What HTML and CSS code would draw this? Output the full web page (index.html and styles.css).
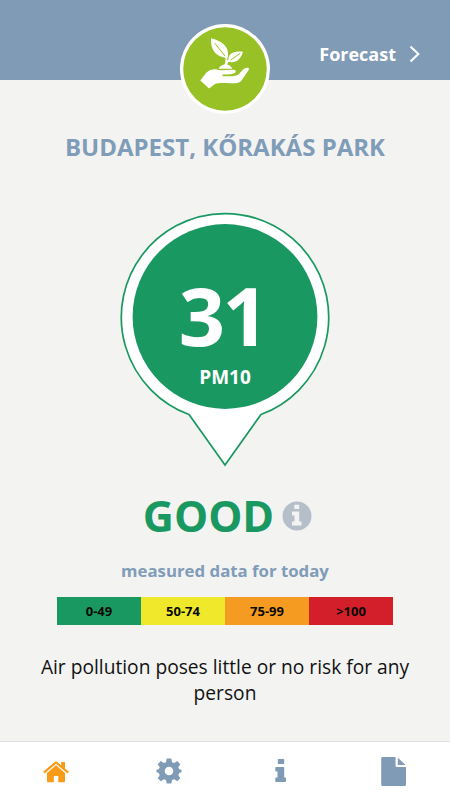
FILE: index.html
```html
<!DOCTYPE html>
<html lang="en">
<head>
<meta charset="utf-8">
<meta name="viewport" content="width=device-width, initial-scale=1">
<title>Air quality</title>
<link rel="stylesheet" href="styles.css">
</head>
<body>
<div class="app">
  <header class="header">
    <svg class="logo" viewBox="0 0 90 90" aria-hidden="true">
      <circle cx="45" cy="45" r="45" fill="#fff"/>
      <circle cx="45" cy="45" r="41.8" fill="#98c125"/>
      <g fill="#fff">
        <path d="M31 14.200C41 16.500 50 22 47.600 34C38 33 30.500 28.500 31 14.200Z"/>
        <path d="M63 27.800C60.500 36 55.500 39.500 48.700 37.800C47 29.500 53.500 26.300 63 27.800Z"/>
        <path d="M38.600 44.700C39.500 42 42.500 41.300 44.500 40.300Q46 39.500 47.500 40.500C50 41.500 51.500 42.500 52 44.700Z"/>
        <path d="M20.300 56.500L26 49C30 45.300 34 44.800 37.500 45.700C44 47.200 50 44.600 55.500 46.200C57 49.500 52 50.700 44 50.500C42 50.500 41.500 52 43.500 52.200C50 52.500 57 52.500 59.500 49.500C62 46.500 64.500 43.300 68 43.700C70.500 44.500 67.500 47.500 66 50L61.500 56.500C59.500 59.500 55 59.300 50 59.200C44 59 38 58.800 35 60L29 64.500Z"/>
      </g>
      <g fill="none" stroke-linecap="round">
        <path d="M35 19.500L45 32M60 29.500L50 36.500" stroke="#98c125" stroke-width="1"/>
        <path d="M45.600 41Q47 35 46 31.500M46.300 40Q47.500 37 50 35.800" stroke="#fff" stroke-width="1.800"/>
      </g>
    </svg>
    <a class="forecast"><span>Forecast</span>
      <svg class="chevron" viewBox="0 0 12 18" aria-hidden="true"><path d="M1.500 1.500L9.300 9L1.500 16.500" fill="none" stroke="#fff" stroke-width="2.100"/></svg>
    </a>
  </header>
  <main class="main">
    <h1 class="station">BUDAPEST, KŐRAKÁS PARK</h1>
    <section class="reading">
      <svg class="pin" viewBox="0 0 210 254" aria-hidden="true">
        <path d="M69 202.500A103.700 103.700 0 1 1 141 202.500L105 253Z" fill="#fff" stroke="#199961" stroke-width="1.700"/>
        <circle cx="105" cy="104.500" r="92.400" fill="#199961"/>
      </svg>
      <div class="reading-text"><div class="value">31</div><div class="unit">PM10</div></div>
    </section>
    <div class="status"><span class="status-text">GOOD</span>
      <svg class="status-info" viewBox="0 0 30 30" aria-hidden="true"><circle cx="15" cy="15" r="14.500" fill="#b6bfc9"/><path d="M12.300 3.800H17.200V8H12.300ZM10 10.500H17.200V20.500H19.500V24.500H10V20.500H12.500V14.500H10Z" fill="#f3f3f1"/></svg>
    </div>
    <p class="note">measured data for today</p>
    <div class="scale">
      <div class="band band-good">0-49</div><div class="band band-fair">50-74</div><div class="band band-poor">75-99</div><div class="band band-bad">&gt;100</div>
    </div>
    <p class="advice">Air pollution poses little or no risk for any person</p>
  </main>
  <nav class="tabs">
    <a class="tab tab-active"><svg viewBox="0 0 32 32" aria-hidden="true"><path d="M3.200 16.700L14.700 6.900Q16 5.900 17.300 6.900L21.200 10.200V7H25V13.400L28.900 16.700L27.500 18.400L16 8.800L4.600 18.400Z"/><path d="M16 10.300L25 17.900V26.300Q25 27.300 24 27.300H18.300V21H13.800V27.300H8Q7 27.300 7 26.300V17.900Z"/></svg></a>
    <a class="tab"><svg viewBox="0 0 32 32" aria-hidden="true"><path fill-rule="evenodd" d="M13.700 3.500H18.300L19 7.200L21.200 8.100L24.200 6L27.300 9.200L25.300 12.200L26.200 14.200L28.500 14.700V17.300L26.200 18L25.300 20.200L27.300 23.200L24.200 26.200L21.200 24.200L19 25.100L18.300 28.500H13.700L13 25.100L10.800 24.200L7.800 26.200L4.700 23.200L6.700 20.200L5.800 18L3.500 17.300V14.700L5.800 14.200L6.700 12.200L4.700 9.200L7.800 6L10.800 8.100L13 7.200ZM16 11.700A4.300 4.300 0 1 0 16 20.300A4.300 4.300 0 1 0 16 11.700Z"/></svg></a>
    <a class="tab"><svg viewBox="0 0 32 32" aria-hidden="true"><path d="M13.300 4H18.700Q19.200 4 19.200 4.500V8.500Q19.200 9 18.700 9H13.300Q12.800 9 12.800 8.500V4.500Q12.800 4 13.300 4ZM11 12H18.500Q19.200 12 19.200 12.700V22.500H20.300Q21 22.500 21 23.200V26.300Q21 27 20.300 27H11Q10.300 27 10.300 26.300V23.200Q10.300 22.500 11 22.500H12.500V16.500H11Q10.300 16.500 10.300 15.800V12.700Q10.300 12 11 12Z"/></svg></a>
    <a class="tab"><svg viewBox="0 0 32 32" aria-hidden="true"><path d="M4.500 2H17.500V10.500Q17.500 12 19 12H28V29.500Q28 31 26.500 31H4.500Q3.200 31 3.200 29.500V3.500Q3.200 2 4.500 2ZM19.800 2.800L27.600 10H19.800Z"/></svg></a>
  </nav>
</div>
</body>
</html>
```
FILE: styles.css
```css
* { box-sizing: border-box; }
body { margin: 0; font-family: "Open Sans", "Noto Sans", sans-serif; background: #f3f3f1; }
.app { width: 450px; height: 800px; display: flex; flex-direction: column; }
.header { position: relative; height: 80px; background: #809bb5; display: flex; justify-content: flex-end; padding: 40px 29px 0 0; }
.logo { position: absolute; left: 180px; top: 24px; width: 90px; height: 90px; }
.forecast { display: flex; align-items: center; gap: 13px; height: 28px; color: #fff; font-size: 18px; font-weight: 700; }
.chevron { width: 12px; height: 18px; }
.main { flex: 1; display: flex; flex-direction: column; align-items: center; }
.station { margin: 49px 0 0; font-size: 24px; line-height: 36px; font-weight: 700; color: #7f9cb8; white-space: nowrap; }
.reading { display: grid; width: 210px; height: 254px; margin-top: 47px; }
.pin, .reading-text { grid-area: 1 / 1; }
.pin { width: 210px; height: 254px; overflow: visible; }
.reading-text { z-index: 1; text-align: center; color: #fff; font-weight: 700; }
.value { font-size: 81px; line-height: 90px; padding-top: 58px; margin-right: 5px; letter-spacing: -2.5px; }
.unit { font-size: 19px; line-height: 24px; margin-top: 5px; }
.status { display: flex; align-items: center; gap: 8px; height: 60px; margin-top: 20px; margin-left: 5px; }
.status-text { color: #199961; font-size: 43px; font-weight: 700; line-height: 60px; }
.status-info { width: 30px; height: 30px; }
.note { margin: 13px 0 0; color: #7f9cb8; font-size: 16.8px; line-height: 24px; font-weight: 700; }
.scale { display: grid; grid-template-columns: repeat(4, 84px); height: 28px; margin-top: 14px; }
.band { text-align: center; font-size: 13px; line-height: 28px; font-weight: 700; color: #080a05; }
.band-good { background: #199961; }
.band-fair { background: #efe82b; }
.band-poor { background: #f59b22; }
.band-bad { background: #d31f2a; }
.advice { width: 374px; margin: 29px 0 0; font-size: 19.2px; line-height: 26px; text-align: center; color: #111; }
.tabs { height: 59px; border-top: 1px solid #dedfe0; background: #fff; display: grid; grid-template-columns: repeat(4, 1fr); align-items: center; }
.tab { display: flex; justify-content: center; color: #809bb5; }
.tab-active { color: #f89b18; }
.tab svg { width: 32px; height: 32px; fill: currentColor; }
```
